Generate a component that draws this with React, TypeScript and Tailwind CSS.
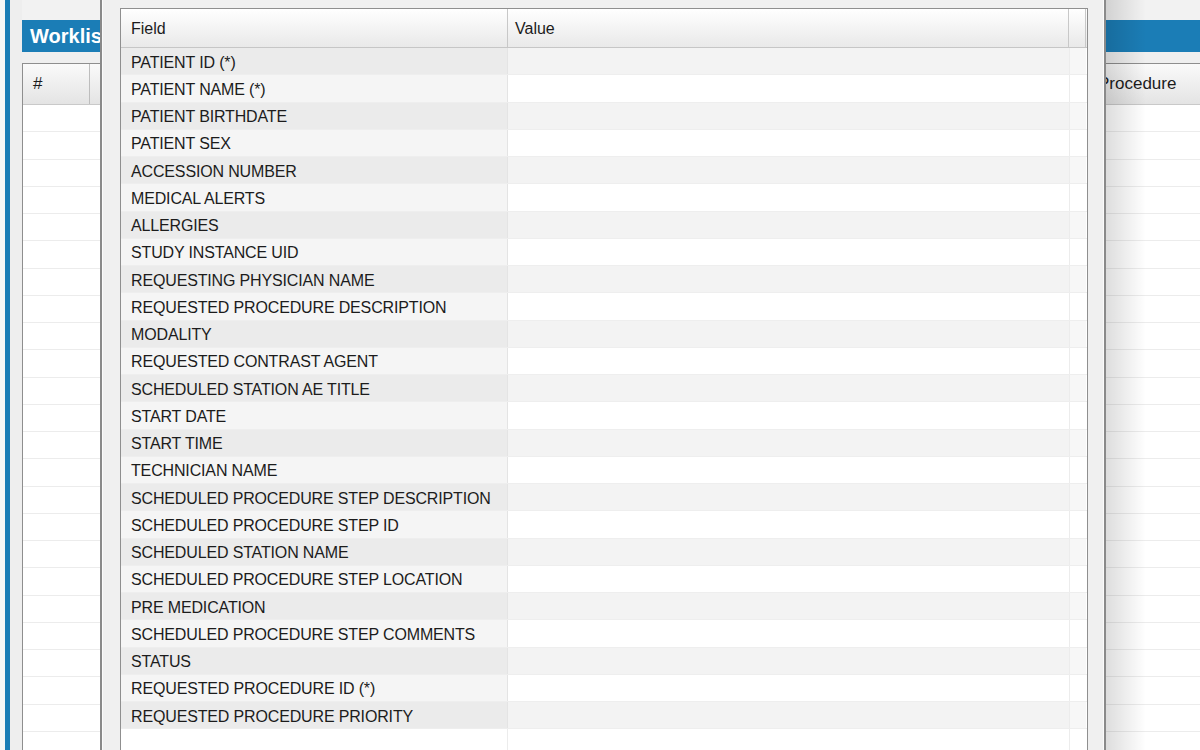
import React from 'react';

const fields = [
  'PATIENT ID (*)',
  'PATIENT NAME (*)',
  'PATIENT BIRTHDATE',
  'PATIENT SEX',
  'ACCESSION NUMBER',
  'MEDICAL ALERTS',
  'ALLERGIES',
  'STUDY INSTANCE UID',
  'REQUESTING PHYSICIAN NAME',
  'REQUESTED PROCEDURE DESCRIPTION',
  'MODALITY',
  'REQUESTED CONTRAST AGENT',
  'SCHEDULED STATION AE TITLE',
  'START DATE',
  'START TIME',
  'TECHNICIAN NAME',
  'SCHEDULED PROCEDURE STEP DESCRIPTION',
  'SCHEDULED PROCEDURE STEP ID',
  'SCHEDULED STATION NAME',
  'SCHEDULED PROCEDURE STEP LOCATION',
  'PRE MEDICATION',
  'SCHEDULED PROCEDURE STEP COMMENTS',
  'STATUS',
  'REQUESTED PROCEDURE ID (*)',
  'REQUESTED PROCEDURE PRIORITY',
];

const bgRows = Array.from({ length: 24 });

export default function App() {
  return (
    <div className="relative w-[1200px] h-[750px] overflow-hidden bg-[#f2f2f2] text-[#1c1c1c] font-['Liberation_Sans',Arial,sans-serif]">
      {/* Background worklist window */}
      <div className="flex h-full">
        <div className="w-[5px] shrink-0 bg-[#f7f7f7]" />
        <div className="w-[5px] shrink-0 bg-[#1b7db6]" />
        <div className="w-[12px] shrink-0 bg-[#eeeeee]" />
        <div className="flex-1 flex flex-col pt-[20px] overflow-hidden">
          <div className="h-[32px] shrink-0 bg-[#1b7db6] text-white font-bold text-[20px] flex items-center pl-[8px]">
            Worklist
          </div>
          <div className="h-[11px] shrink-0 bg-[#efefef]" />
          <div className="flex-1 flex flex-col border-l border-t border-[#8e8e8e] bg-white overflow-hidden">
            <div className="h-[41px] shrink-0 flex border-b border-[#c9c9c9] bg-gradient-to-b from-[#fafafa] to-[#e4e4e4] text-[17px]">
              <div className="w-[67px] flex items-center pl-[10px] border-r border-[#bdbdbd]">#</div>
              <div className="flex-1 border-r border-[#bdbdbd]" />
              <div className="w-[104px] flex items-center pl-[2px]">Procedure</div>
            </div>
            {bgRows.map((_, i) => (
              <div key={i} className="h-[27.25px] shrink-0 border-b border-[#ececec] bg-white" />
            ))}
          </div>
        </div>
      </div>

      {/* Dialog shadow */}
      <div className="absolute top-0 bottom-0 left-[1106px] w-[40px] bg-gradient-to-r from-[#00000022] to-transparent" />

      {/* Dialog window */}
      <div className="absolute top-0 bottom-0 left-[100px] w-[1006px] flex border-x-2 border-[#8a8a8a] bg-[#f0f0f0]">
        <div className="flex-1 flex flex-col pl-[17px] pr-[15px] pt-[8px] border-x border-[#fbfbfb]">
          <div className="flex-1 flex flex-col border-l border-t border-r border-[#8f8f8f] bg-white overflow-hidden">
            {/* Header */}
            <div className="h-[39px] shrink-0 flex border-b border-[#c6c6c6] bg-gradient-to-b from-[#ffffff] to-[#e9e9e9] text-[16px]">
              <div className="w-[387px] flex items-center pl-[10px] pt-[2px] border-r border-[#c8c8c8]">Field</div>
              <div className="w-[561px] flex items-center pl-[7px] pt-[2px] border-r border-[#c8c8c8]">Value</div>
              <div className="w-[17px] border-r border-[#c8c8c8]" />
              <div className="flex-1" />
            </div>
            {/* Rows */}
            {fields.map((f, i) => (
              <div key={f} className="h-[27.25px] shrink-0 flex text-[16px] border-b border-[#eeeeee]">
                <div
                  className={
                    i % 2 === 0
                      ? 'w-[387px] flex items-center pl-[10px] pt-[3px] tracking-[-0.15px] bg-[#ebebeb] border-r border-[#e4e4e4] whitespace-nowrap'
                      : 'w-[387px] flex items-center pl-[10px] pt-[3px] tracking-[-0.15px] bg-[#f5f5f5] border-r border-[#e4e4e4] whitespace-nowrap'
                  }
                >
                  {f}
                </div>
                <div className={i % 2 === 0 ? 'w-[561px] bg-[#f3f3f3]' : 'w-[561px] bg-white'} />
                <div className={i % 2 === 0 ? 'w-[17px] border-l border-[#ececec] bg-[#f7f7f7]' : 'w-[17px] border-l border-[#ececec] bg-white'} />
                <div className="flex-1" />
              </div>
            ))}
            <div className="flex-1 flex">
              <div className="w-[387px] border-r border-[#ececec] bg-white" />
              <div className="w-[561px] bg-white" />
              <div className="w-[17px] border-l border-[#ececec]" />
            </div>
          </div>
        </div>
      </div>
    </div>
  );
}
